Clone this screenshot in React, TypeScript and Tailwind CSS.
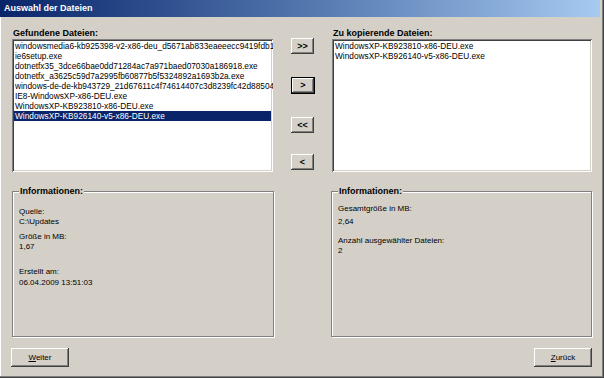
import React from "react";

const found = [
  "windowsmedia6-kb925398-v2-x86-deu_d5671ab833eaeeecc9419fdb1",
  "ie6setup.exe",
  "dotnetfx35_3dce66bae0dd71284ac7a971baed07030a186918.exe",
  "dotnetfx_a3625c59d7a2995fb60877b5f5324892a1693b2a.exe",
  "windows-de-de-kb943729_21d67611c4f74614407c3d8239fc42d88504",
  "IE8-WindowsXP-x86-DEU.exe",
  "WindowsXP-KB923810-x86-DEU.exe",
  "WindowsXP-KB926140-v5-x86-DEU.exe",
];

const toCopy = ["WindowsXP-KB923810-x86-DEU.exe", "WindowsXP-KB926140-v5-x86-DEU.exe"];

const raised =
  "flex items-center justify-center bg-[#d4d0c8] text-black shadow-[inset_-1px_-1px_#404040,inset_1px_1px_#ffffff,inset_-2px_-2px_#808080,inset_2px_2px_#d4d0c8]";

const sunken =
  "bg-white overflow-hidden p-[2px] shadow-[inset_1px_1px_#808080,inset_-1px_-1px_#ffffff,inset_2px_2px_#404040,inset_-2px_-2px_#d4d0c8]";

const etched = "relative border border-[#808080] shadow-[inset_1px_1px_#ffffff,1px_1px_#ffffff]";

const GroupBox: React.FC<{ className?: string; children: React.ReactNode }> = ({ className, children }) => (
  <div className={`${etched} ${className ?? ""}`}>
    {/* legend over the border line */}
    <span className="absolute left-[6px] -top-[6px] bg-[#d4d0c8] px-[1px] text-[9px] leading-[10px] font-bold">
      Informationen:
    </span>
    {children}
  </div>
);

const MoveButton: React.FC<{ label: string; focused?: boolean; className?: string }> = ({ label, focused, className }) => (
  <div className={`${className ?? ""} ${focused ? "border border-black" : ""} w-[23px] h-[16px] flex`}>
    <button className={`${raised} flex-1 text-[9px] font-bold leading-none`}>{label}</button>
  </div>
);

export default function App() {
  return (
    <div className="w-[604px] h-[378px] bg-[#d4d0c8] font-['Liberation_Sans',Arial,sans-serif] text-black flex flex-col overflow-hidden shadow-[inset_-1px_-1px_#404040,inset_-2px_-2px_#808080,inset_1px_0_#ffffff]">
      {/* Title bar */}
      <div className="h-[17px] mr-[4px] bg-gradient-to-r from-[#0a246a] to-[#a6caf0] flex items-center pl-[4px]">
        <span className="text-white text-[9px] font-bold leading-none">Auswahl der Dateien</span>
      </div>

      <div className="flex flex-col px-[12px] pt-[10px]">
        {/* Lists and move buttons */}
        <div className="flex">
          <div className="w-[261px] flex flex-col">
            <div className="h-[12px] text-[9px] leading-[12px] font-bold pl-[1px]">Gefundene Dateien:</div>
            <div className={`${sunken} h-[133px]`}>
              {found.map((f, i) => (
                <div
                  key={f}
                  className={`h-[10px] text-[8.3px] leading-[10px] whitespace-nowrap pl-[1px] ${
                    i === found.length - 1 ? "bg-[#0a246a] text-white" : ""
                  }`}
                >
                  {f}
                </div>
              ))}
            </div>
          </div>

          <div className="ml-[18px] flex flex-col">
            <MoveButton label=">>" className="mt-[11px]" />
            <MoveButton label=">" focused className="mt-[23px] h-[17px] w-[24px]" />
            <MoveButton label="<<" className="mt-[23px]" />
            <MoveButton label="<" className="mt-[21px]" />
          </div>

          <div className="ml-[17px] w-[261px] flex flex-col">
            <div className="h-[12px] text-[9px] leading-[12px] font-bold pl-[1px]">Zu kopierende Dateien:</div>
            <div className={`${sunken} h-[133px]`}>
              {toCopy.map((f) => (
                <div key={f} className="h-[10px] text-[8.3px] leading-[10px] whitespace-nowrap pl-[1px]">
                  {f}
                </div>
              ))}
            </div>
          </div>
        </div>

        {/* Information panels */}
        <div className="flex mt-[19px] justify-between">
          <GroupBox className="w-[262px] h-[146px]">
            <div className="pl-[6px] pt-[15px] text-[8px] leading-[10px]">
              <div>Quelle:</div>
              <div>C:\Updates</div>
              <div className="mt-[5px]">Größe in MB:</div>
              <div>1,67</div>
              <div className="mt-[15px]">Erstellt am:</div>
              <div className="mt-[1px]">06.04.2009 13:51:03</div>
            </div>
          </GroupBox>
          <GroupBox className="w-[261px] h-[146px]">
            <div className="pl-[6px] pt-[12px] text-[8px] leading-[10px]">
              <div>Gesamtgröße in MB:</div>
              <div className="mt-[3px]">2,64</div>
              <div className="mt-[9px]">Anzahl ausgewählter Dateien:</div>
              <div>2</div>
            </div>
          </GroupBox>
        </div>

        {/* Bottom buttons */}
        <div className="flex justify-between mt-[11px] -ml-[1px]">
          <button className={`${raised} w-[58px] h-[19px] text-[8px]`}>
            <span>
              <span className="underline">W</span>eiter
            </span>
          </button>
          <button className={`${raised} w-[58px] h-[19px] text-[8px]`}>
            <span>
              <span className="underline">Z</span>urück
            </span>
          </button>
        </div>
      </div>
    </div>
  );
}
